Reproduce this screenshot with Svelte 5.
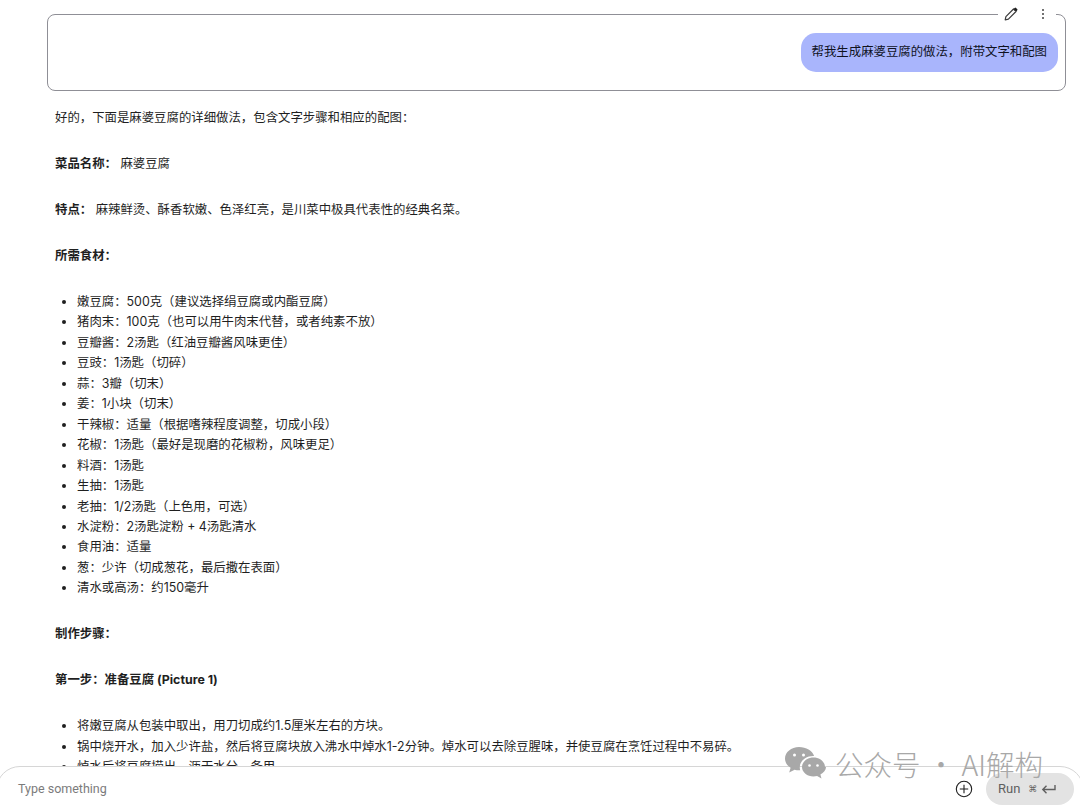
<script>
  const ingredients = [
    '嫩豆腐：500克（建议选择绢豆腐或内酯豆腐）',
    '猪肉末：100克（也可以用牛肉末代替，或者纯素不放）',
    '豆瓣酱：2汤匙（红油豆瓣酱风味更佳）',
    '豆豉：1汤匙（切碎）',
    '蒜：3瓣（切末）',
    '姜：1小块（切末）',
    '干辣椒：适量（根据嗜辣程度调整，切成小段）',
    '花椒：1汤匙（最好是现磨的花椒粉，风味更足）',
    '料酒：1汤匙',
    '生抽：1汤匙',
    '老抽：1/2汤匙（上色用，可选）',
    '水淀粉：2汤匙淀粉 + 4汤匙清水',
    '食用油：适量',
    '葱：少许（切成葱花，最后撒在表面）',
    '清水或高汤：约150毫升'
  ];
  const prep = [
    '将嫩豆腐从包装中取出，用刀切成约1.5厘米左右的方块。',
    '锅中烧开水，加入少许盐，然后将豆腐块放入沸水中焯水1-2分钟。焯水可以去除豆腥味，并使豆腐在烹饪过程中不易碎。',
    '焯水后将豆腐捞出，沥干水分，备用。'
  ];
</script>

<div class="page">
  <section class="prompt">
    <div class="tools">
      <svg class="pen" width="16" height="16" viewBox="0 0 16 16" fill="none">
        <path d="M2.2 13.8l.7-3.2 7.6-7.6 2.5 2.5-7.6 7.6z" stroke="#3c3c3c" stroke-width="1.2" stroke-linejoin="round"/>
        <path d="M10.6 2.9l1-1a1 1 0 0 1 1.4 0l1.1 1.1a1 1 0 0 1 0 1.4l-1 1z" fill="#1f1f1f"/>
      </svg>
      <svg width="4" height="12" viewBox="0 0 4 12" fill="#444">
        <circle cx="2" cy="2" r="1"/><circle cx="2" cy="6" r="1"/><circle cx="2" cy="10" r="1"/>
      </svg>
    </div>
    <div class="bubble">帮我生成麻婆豆腐的做法，附带文字和配图</div>
  </section>

  <article class="answer">
    <p>好的，下面是麻婆豆腐的详细做法，包含文字步骤和相应的配图：</p>
    <p><b>菜品名称：</b> 麻婆豆腐</p>
    <p><b>特点：</b> 麻辣鲜烫、酥香软嫩、色泽红亮，是川菜中极具代表性的经典名菜。</p>
    <p><b>所需食材：</b></p>
    <ul>
      {#each ingredients as item}<li>{item}</li>{/each}
    </ul>
    <p><b>制作步骤：</b></p>
    <p><b>第一步：准备豆腐 (Picture 1)</b></p>
    <ul>
      {#each prep as item}<li>{item}</li>{/each}
    </ul>
  </article>

  <footer class="composer">
    <span class="placeholder">Type something</span>
    <svg class="add" width="18" height="18" viewBox="0 0 18 18" fill="none" stroke="#1f1f1f" stroke-width="1.1">
      <circle cx="9" cy="9" r="7.7"/><path d="M9 4.8v8.4M4.8 9h8.4"/>
    </svg>
    <div class="run">
      <span>Run</span>
      <span class="cmd">⌘</span>
      <svg width="15" height="11" viewBox="0 0 15 11" fill="none" stroke="#5f5f5f" stroke-width="1.4">
        <path d="M14 1v4.5H2M5.5 1.8L1.8 5.5l3.7 3.7"/>
      </svg>
    </div>
  </footer>

  <div class="watermark">
    <svg width="42" height="36" viewBox="0 0 42 36" fill="#a8a8a8">
      <path d="M15 1C7.3 1 1 6.2 1 12.6c0 3.8 2.2 7 5.6 9.2L5.2 26.5l5.4-2.8c1.4.4 2.9.6 4.4.6h1.2a10.5 10.5 0 0 1-.4-3c0-6.4 6-11.4 13.4-11.4h.9C28.3 4.8 22.2 1 15 1z"/>
      <path d="M41 21c0-5.3-5.3-9.5-11.5-9.5S18 15.7 18 21s5.3 9.5 11.500 9.5c1.3 0 2.5-.2 3.6-.5l4.400 2.600-1.100-4c3.200-1.800 5.600-4.500 5.600-7.600z"/>
      <circle cx="10.5" cy="9" r="1.5" fill="#fff"/><circle cx="19.5" cy="9" r="1.5" fill="#fff"/>
      <circle cx="25.5" cy="19.5" r="1.3" fill="#fff"/><circle cx="33.5" cy="19.5" r="1.3" fill="#fff"/>
    </svg>
    <span>公众号 · AI解构</span>
  </div>
</div>

<style>
  :global(body) {
    margin: 0;
    background: #fff;
  }

  .page {
    position: relative;
    width: 1080px;
    height: 808px;
    overflow: hidden;
    color: #1f1f1f;
    font-family: Inter, "Noto Sans CJK SC", sans-serif;
    font-size: 12.4px;
    line-height: 20.45px;
  }

  .prompt {
    position: relative;
    box-sizing: border-box;
    height: 77px;
    margin: 14px 14px 0 47px;
    padding: 18px 7px 0 0;
    display: flex;
    justify-content: flex-end;
    align-items: flex-start;
    border: 1px solid #8f8f96;
    border-radius: 8px;
  }

  .tools {
    position: absolute;
    top: -10px;
    right: 9px;
    display: flex;
    align-items: center;
    gap: 22px;
    height: 18px;
    padding: 0 11px 0 5px;
    background: #fff;
  }

  .bubble {
    padding: 9px 11px 10px;
    background: #a9b5fc;
    border-radius: 15px;
    color: #10131f;
  }

  .answer {
    margin: 17px 0 0 55px;
    width: 1000px;
  }

  p {
    margin: 0 0 25.55px;
  }

  b {
    font-weight: 700;
  }

  ul {
    margin: 0 0 25.55px;
    padding-left: 22px;
  }

  .composer {
    position: absolute;
    left: -4px;
    right: -4px;
    top: 766px;
    height: 70px;
    box-sizing: border-box;
    padding: 0 9px 0 21px;
    display: flex;
    align-items: flex-start;
    background: #fff;
    border: 1px solid #d6d6d6;
    border-radius: 24px;
  }

  .placeholder {
    flex: 1;
    margin-top: 12px;
    color: #7b7b7b;
    font-size: 12.5px;
    font-family: Roboto, sans-serif;
  }

  .add {
    margin: 13px 13px 0 0;
  }

  .run {
    display: flex;
    align-items: center;
    box-sizing: border-box;
    width: 88px;
    height: 32px;
    margin-top: 6px;
    padding-left: 12px;
    background: #e3e3e3;
    border-radius: 16px;
    color: #5f5f5f;
    font-family: Roboto, sans-serif;
    font-size: 13px;
  }

  .cmd {
    margin: 0 4px 0 8px;
    font-size: 9px;
    font-family: "DejaVu Sans", sans-serif;
  }

  .watermark {
    position: absolute;
    left: 784px;
    top: 746px;
    display: flex;
    align-items: center;
    gap: 9px;
    color: #a8a8a8;
    font-family: "Noto Sans CJK SC", sans-serif;
    font-size: 28.5px;
    font-weight: 300;
    line-height: 36px;
    white-space: nowrap;
  }
</style>
